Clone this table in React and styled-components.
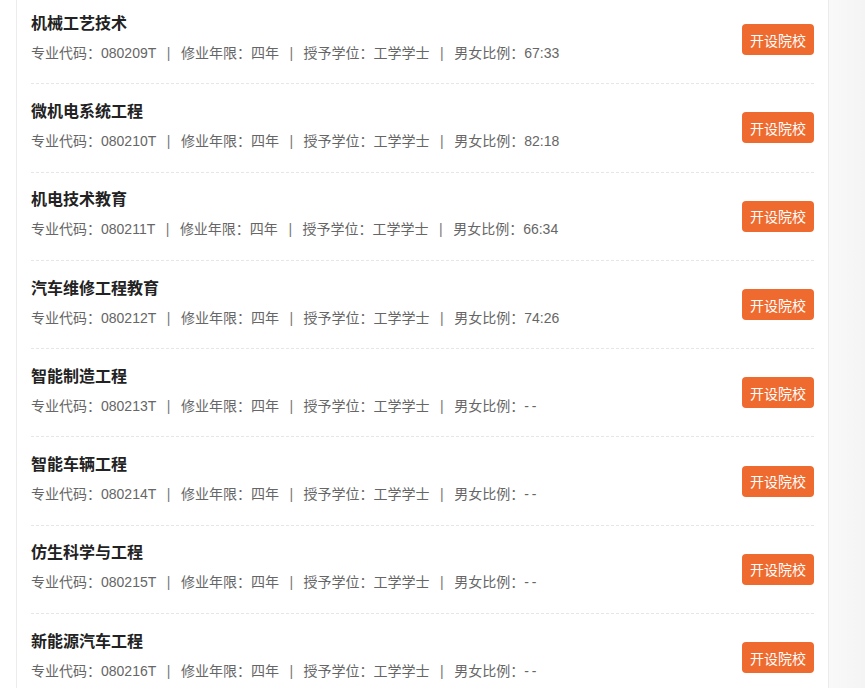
import React from "react";
import styled, { createGlobalStyle } from "styled-components";

const Global = createGlobalStyle`
  *, *::before, *::after { box-sizing: border-box; }
  html, body { margin: 0; padding: 0; background: #fff; }
  body {
    font-family: "Liberation Sans", "Noto Sans CJK SC", Arial, sans-serif;
    overflow: hidden;
  }
`;

const Page = styled.div`
  display: flex;
  height: 688px;
  overflow: hidden;
  background: #fff;
`;

const Gutter = styled.div`
  width: 16px;
  flex: none;
`;

const Card = styled.div`
  width: 813px;
  flex: none;
  border-left: 1px solid #ececec;
  border-right: 1px solid #ececec;
  background: #fff;
  padding: 0 14px 0 14px;
  margin-top: -4px;
`;

const Side = styled.div`
  flex: 1;
  background: linear-gradient(to right, #f9f9f9, #f4f4f4);
`;

const Row = styled.div`
  display: flex;
  align-items: center;
  justify-content: space-between;
  height: 88.3px;
  border-bottom: 1px dashed #e6e6e6;
`;

const Info = styled.div`
  display: flex;
  flex-direction: column;
  padding-bottom: 4px;
`;

const Title = styled.div`
  font-size: 16px;
  line-height: 24px;
  font-weight: 700;
  color: #222;
  margin-bottom: 6px;
`;

const Meta = styled.div`
  display: flex;
  align-items: center;
  font-size: 14px;
  line-height: 22px;
  color: #666;
  white-space: nowrap;
`;

const Sep = styled.span`
  display: inline-block;
  margin: 0 10.5px;
  color: #777;
`;

const Dash = styled.span`
  letter-spacing: 3px;
`;

const Button = styled.button`
  flex: none;
  width: 72px;
  height: 31px;
  margin-top: 0;
  border: none;
  border-radius: 4px;
  background: #ee6a2e;
  color: #fff;
  font-family: "Noto Sans CJK SC", sans-serif;
  font-size: 14px;
  padding: 0;
  cursor: pointer;
`;

const items = [
  ["机械工艺技术", "080209T", "67:33"],
  ["微机电系统工程", "080210T", "82:18"],
  ["机电技术教育", "080211T", "66:34"],
  ["汽车维修工程教育", "080212T", "74:26"],
  ["智能制造工程", "080213T", null],
  ["智能车辆工程", "080214T", null],
  ["仿生科学与工程", "080215T", null],
  ["新能源汽车工程", "080216T", null],
];

export default function App() {
  return (
    <>
      <Global />
      <Page>
        <Gutter />
        <Card>
          {items.map(([name, code, ratio]) => (
            <Row key={code}>
              <Info>
                <Title>{name}</Title>
                <Meta>
                  <span>专业代码：{code}</span>
                  <Sep>|</Sep>
                  <span>修业年限：四年</span>
                  <Sep>|</Sep>
                  <span>授予学位：工学学士</span>
                  <Sep>|</Sep>
                  <span>男女比例：{ratio ?? <Dash>--</Dash>}</span>
                </Meta>
              </Info>
              <Button>开设院校</Button>
            </Row>
          ))}
        </Card>
        <Side />
      </Page>
    </>
  );
}
